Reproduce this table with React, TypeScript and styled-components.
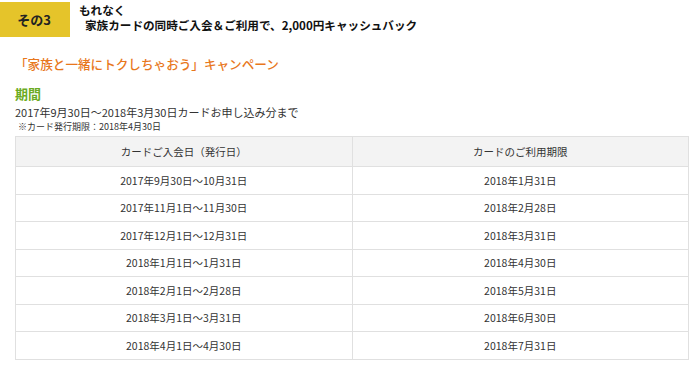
import React from "react";
import styled, { createGlobalStyle } from "styled-components";

const GlobalStyle = createGlobalStyle`
  html, body {
    margin: 0;
    padding: 0;
    background: #fff;
  }
  body {
    font-family: "Noto Sans CJK JP", "Noto Sans", sans-serif;
    color: #333;
  }
`;

const Page = styled.div`
  width: 700px;
  height: 365px;
  overflow: hidden;
`;

const Header = styled.div`
  display: flex;
  align-items: flex-start;
  padding-top: 2px;
  gap: 9px;
`;

const Badge = styled.div`
  width: 70px;
  height: 35px;
  background: #e5c42a;
  display: flex;
  align-items: center;
  justify-content: center;
  font-size: 13px;
  font-weight: 700;
  color: #222;
  padding-right: 2px;
  box-sizing: border-box;
`;

const HeaderTitle = styled.div`
  font-size: 11.6px;
  font-weight: 700;
  color: #111;
  line-height: 15px;
  padding-top: 1px;
`;

const Indent = styled.span`
  padding-left: 6px;
`;

const Body = styled.div`
  padding: 18px 12px 0 15px;
`;

const Campaign = styled.h2`
  margin: 0;
  font-size: 12.6px;
  font-weight: 500;
  color: #e8771c;
  line-height: 18px;
`;

const PeriodLabel = styled.h3`
  margin: 12px 0 0;
  font-size: 13px;
  font-weight: 700;
  color: #6bab22;
  line-height: 17px;
`;

const PeriodText = styled.p`
  margin: 3px 0 0;
  font-size: 11px;
  line-height: 15px;
  color: #333;
`;

const Note = styled.p`
  margin: 0 0 0 3px;
  font-size: 9px;
  line-height: 13px;
  color: #333;
`;

const Table = styled.table`
  margin-top: 3px;
  width: 674px;
  border-collapse: collapse;
  font-size: 10.5px;
  color: #333;
`;

const Th = styled.th`
  height: 29px;
  background: #f3f3f3;
  border: 1px solid #e0e0e0;
  font-weight: 400;
  text-align: center;
  width: 50%;
  padding: 0;
`;

const Td = styled.td`
  height: 26.5px;
  border: 1px solid #e0e0e0;
  text-align: center;
  padding: 0;
`;

const rows: [string, string][] = [
  ["2017年9月30日～10月31日", "2018年1月31日"],
  ["2017年11月1日～11月30日", "2018年2月28日"],
  ["2017年12月1日～12月31日", "2018年3月31日"],
  ["2018年1月1日～1月31日", "2018年4月30日"],
  ["2018年2月1日～2月28日", "2018年5月31日"],
  ["2018年3月1日～3月31日", "2018年6月30日"],
  ["2018年4月1日～4月30日", "2018年7月31日"],
];

export default function App() {
  return (
    <Page>
      <GlobalStyle />
      <Header>
        <Badge>その3</Badge>
        <HeaderTitle>
          もれなく
          <br />
          <Indent>家族カードの同時ご入会＆ご利用で、2,000円キャッシュバック</Indent>
        </HeaderTitle>
      </Header>
      <Body>
        <Campaign>「家族と一緒にトクしちゃおう」キャンペーン</Campaign>
        <PeriodLabel>期間</PeriodLabel>
        <PeriodText>2017年9月30日～2018年3月30日カードお申し込み分まで</PeriodText>
        <Note>※カード発行期限：2018年4月30日</Note>
        <Table>
          <thead>
            <tr>
              <Th>カードご入会日（発行日）</Th>
              <Th>カードのご利用期限</Th>
            </tr>
          </thead>
          <tbody>
            {rows.map(([from, until]) => (
              <tr key={from}>
                <Td>{from}</Td>
                <Td>{until}</Td>
              </tr>
            ))}
          </tbody>
        </Table>
      </Body>
    </Page>
  );
}
